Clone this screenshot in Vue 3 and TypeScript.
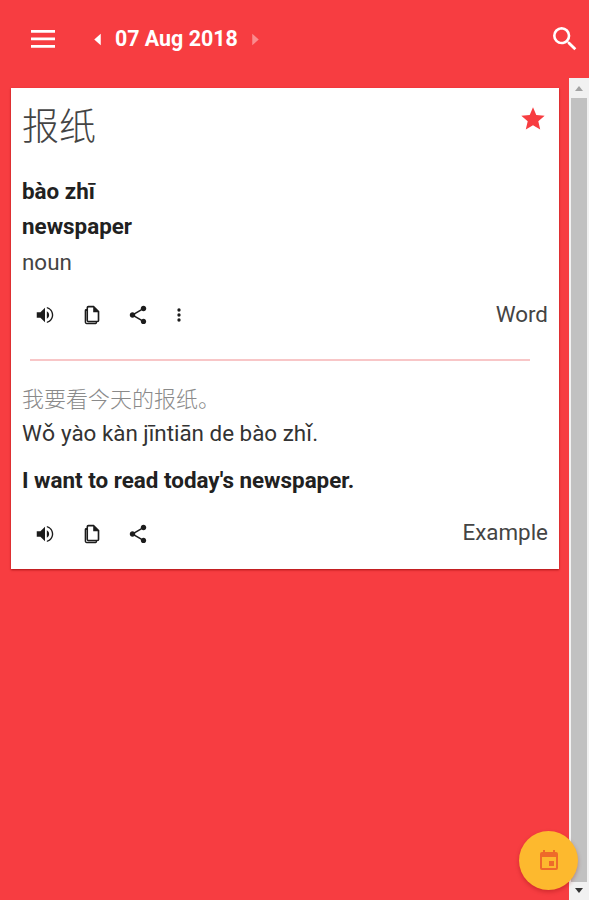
<script setup lang="ts">
interface Action {
  name: string
  path: string
}

const sound = 'M3 9v6h4l5 5V4L7 9H3zm13.500 3c0-1.770-1.020-3.290-2.500-4.030v8.050c1.480-.730 2.500-2.250 2.500-4.020zM14 3.230v1.500c3.200.860 5.500 3.800 5.500 7.270s-2.300 6.410-5.500 7.270v1.500c4.010-.910 7-4.490 7-8.770s-2.990-7.860-7-8.770z'
const copy = 'M14 2H8a2 2 0 0 0-2 2v1.500H5.500A1.500 1.500 0 0 0 4 7v13a2 2 0 0 0 2 2h10a1.500 1.500 0 0 0 1.500-1.500V20H18a2 2 0 0 0 2-2V8l-6-6zm-8 5.500V18a2 2 0 0 0 2 2h8v.4H6.200a.6.6 0 0 1-.6-.6V7.500H6zM18 18.300H8.300a.6.6 0 0 1-.6-.6V4.300a.6.6 0 0 1 .6-.6h5V9h4.900v9a.3.3 0 0 1-.2.300z'
const share = 'M18 16.080c-.760 0-1.440.300-1.960.770L8.910 12.700c.050-.230.090-.460.090-.700s-.040-.470-.090-.700l7.050-4.110c.540.500 1.250.810 2.040.810 1.660 0 3-1.340 3-3s-1.340-3-3-3-3 1.340-3 3c0 .240.040.470.090.700L8.040 9.810C7.500 9.310 6.790 9 6 9c-1.660 0-3 1.340-3 3s1.340 3 3 3c.790 0 1.500-.310 2.040-.810l7.120 4.160c-.050.210-.080.430-.080.650 0 1.610 1.310 2.920 2.920 2.920s2.920-1.310 2.920-2.920-1.310-2.920-2.920-2.920z'
const more = 'M12 8a2 2 0 1 0 0-4 2 2 0 0 0 0 4zm0 2a2 2 0 1 0 0 4 2 2 0 0 0 0-4zm0 6a2 2 0 1 0 0 4 2 2 0 0 0 0-4z'

const wordActions: Action[] = [
  { name: 'sound', path: sound },
  { name: 'copy', path: copy },
  { name: 'share', path: share },
  { name: 'more', path: more },
]
const exampleActions = wordActions.slice(0, 3)
</script>

<template>
  <div class="page">
    <header class="topbar">
      <svg class="menu" viewBox="0 0 24 24"><path d="M0 3h24v2.800H0zM0 10.500h24v2.800H0zM0 18h24v2.800H0z" /></svg>
      <div class="date-nav">
        <svg class="arrow" viewBox="0 0 10 16"><path d="M9 1v14L1 8z" /></svg>
        <span class="date">07 Aug 2018</span>
        <svg class="arrow dim" viewBox="0 0 10 16"><path d="M1 1v14l8-7z" /></svg>
      </div>
      <svg class="search" viewBox="0 0 24 24"><path d="M15.500 14h-.790l-.280-.270A6.470 6.470 0 0 0 16 9.500 6.500 6.500 0 1 0 9.500 16c1.610 0 3.090-.590 4.230-1.570l.270.280v.790l5 4.990L20.490 19l-4.990-5zm-6 0C7.010 14 5 11.990 5 9.500S7.010 5 9.500 5 14 7.010 14 9.500 11.990 14 9.500 14z" /></svg>
    </header>

    <div class="body">
      <main class="content">
        <section class="card">
          <div class="word-head">
            <h1 class="hanzi">报纸</h1>
            <svg class="star" viewBox="0 0 24 24"><path d="M12 17.270 18.180 21l-1.640-7.030L22 9.240l-7.190-.610L12 2 9.190 8.630 2 9.240l5.460 4.730L5.820 21z" /></svg>
          </div>
          <p class="pinyin">bào zhī</p>
          <p class="meaning">newspaper</p>
          <p class="pos">noun</p>
          <div class="actions word-actions">
            <div class="icons">
              <svg v-for="a in wordActions" :key="a.name" :class="['icon', a.name]" viewBox="0 0 24 24"><path :d="a.path" /></svg>
            </div>
            <span class="kind">Word</span>
          </div>

          <hr class="divider" />

          <p class="sentence">我要看今天的报纸。</p>
          <p class="sentence-pinyin">Wǒ yào kàn jīntiān de bào zhǐ.</p>
          <p class="translation">I want to read today's newspaper.</p>
          <div class="actions example-actions">
            <div class="icons">
              <svg v-for="a in exampleActions" :key="a.name" :class="['icon', a.name]" viewBox="0 0 24 24"><path :d="a.path" /></svg>
            </div>
            <span class="kind">Example</span>
          </div>
        </section>
      </main>

      <div class="scrollbar">
        <svg class="sb-arrow up" viewBox="0 0 8 5"><path d="M4 0l4 5H0z" /></svg>
        <div class="sb-thumb"></div>
        <svg class="sb-arrow down" viewBox="0 0 8 5"><path d="M0 0h8L4 5z" /></svg>
      </div>
    </div>

    <button class="fab" type="button" aria-label="Pick date">
      <svg viewBox="0 0 24 24"><path d="M17 12h-5v5h5v-5zM16 1v2H8V1H6v2H5a2 2 0 0 0-2 2v14a2 2 0 0 0 2 2h14a2 2 0 0 0 2-2V5a2 2 0 0 0-2-2h-1V1h-2zm3 18H5V8h14v11z" /></svg>
    </button>
  </div>
</template>

<style>
html, body { margin: 0; background: #f73d41; }
</style>

<style scoped>
.page {
  position: relative;
  width: 589px;
  height: 900px;
  overflow: hidden;
  display: flex;
  flex-direction: column;
  background: #f73d41;
  font-family: Roboto, "Noto Sans CJK SC", sans-serif;
  color: #212121;
}
.topbar {
  height: 78px;
  flex: none;
  display: flex;
  align-items: center;
  padding: 0 8px 0 31px;
  box-sizing: border-box;
  color: #fff;
}
.topbar svg { fill: currentColor; display: block; }
.menu { width: 24px; height: 24px; }
.date-nav {
  display: flex;
  align-items: center;
  margin-left: 38px;
}
.arrow { width: 9px; height: 13px; }
.arrow.dim { opacity: 0.4; }
.date {
  font-size: 21.400px;
  font-weight: 700;
  margin: 0 13px 0 13px;
  line-height: 26px;
}
.search { width: 32px; height: 32px; margin-left: auto; }

.body {
  flex: 1;
  display: flex;
  min-height: 0;
}
.content {
  flex: 1;
  padding: 10px 10px 0 11px;
  min-width: 0;
}
.card {
  background: #fff;
  height: 481px;
  box-sizing: border-box;
  padding: 15px 11px 0 11px;
  box-shadow: 0 1px 2px rgba(140, 0, 0, 0.7);
}
.word-head {
  display: flex;
  justify-content: space-between;
  align-items: flex-start;
  height: 71px;
}
.hanzi {
  margin: 0;
  font-size: 37px;
  font-weight: 300;
  line-height: 50px;
  color: #444;
}
.star { width: 28px; height: 28px; fill: #f73d41; margin: 2px 1px 0 0; }
p { margin: 0; }
.pinyin, .meaning {
  font-size: 22.400px;
  font-weight: 700;
  line-height: 35px;
}
.pos {
  margin-top: 1px;
  font-size: 22.400px;
  line-height: 35px;
  color: #444;
}
.actions {
  display: flex;
  align-items: center;
  justify-content: space-between;
}
.word-actions { margin-top: 17px; height: 36px; }
.example-actions { margin-top: 19px; height: 36px; }
.icons {
  display: flex;
  align-items: center;
  gap: 24px;
  padding-left: 12px;
}
.icon { width: 22px; height: 22px; fill: #1c1c1c; display: block; }
.icon.copy { margin-left: 1px; }
.icon.more { margin-left: -4px; width: 20px; height: 20px; }
.kind {
  font-size: 22.400px;
  color: #444;
  line-height: 30px;
}
.word-actions .kind { margin-bottom: 2px; }
.example-actions .kind { margin-bottom: 4px; }
.divider {
  border: none;
  height: 2px;
  background: #f8c6c7;
  margin: 26px 18px 0 8px;
}
.sentence {
  margin-top: 23px;
  font-size: 22px;
  font-weight: 300;
  line-height: 32px;
  color: #8a8a8a;
}
.sentence-pinyin {
  font-size: 22.400px;
  line-height: 34px;
  color: #333;
}
.translation {
  margin-top: 13px;
  font-size: 22.400px;
  font-weight: 700;
  line-height: 34px;
}
.scrollbar {
  width: 20px;
  flex: none;
  background: #f1f1f1;
  display: flex;
  flex-direction: column;
  align-items: center;
}
.sb-arrow { width: 8px; height: 5px; flex: none; }
.sb-arrow.up { fill: #a3a3a3; margin: 8px 0 7px; }
.sb-arrow.down { fill: #333; margin: 6px 0 7px; }
.sb-thumb {
  flex: 1;
  width: 16px;
  background: #c1c1c1;
}
.fab {
  position: absolute;
  left: 519px;
  top: 831px;
  width: 59px;
  height: 59px;
  border: none;
  border-radius: 50%;
  padding: 0;
  background: #fdb92e;
  box-shadow: 0 2px 4px rgba(120, 0, 0, 0.3);
  display: flex;
  align-items: center;
  justify-content: center;
}
.fab svg { width: 24px; height: 24px; fill: #ee6a2a; }
</style>
